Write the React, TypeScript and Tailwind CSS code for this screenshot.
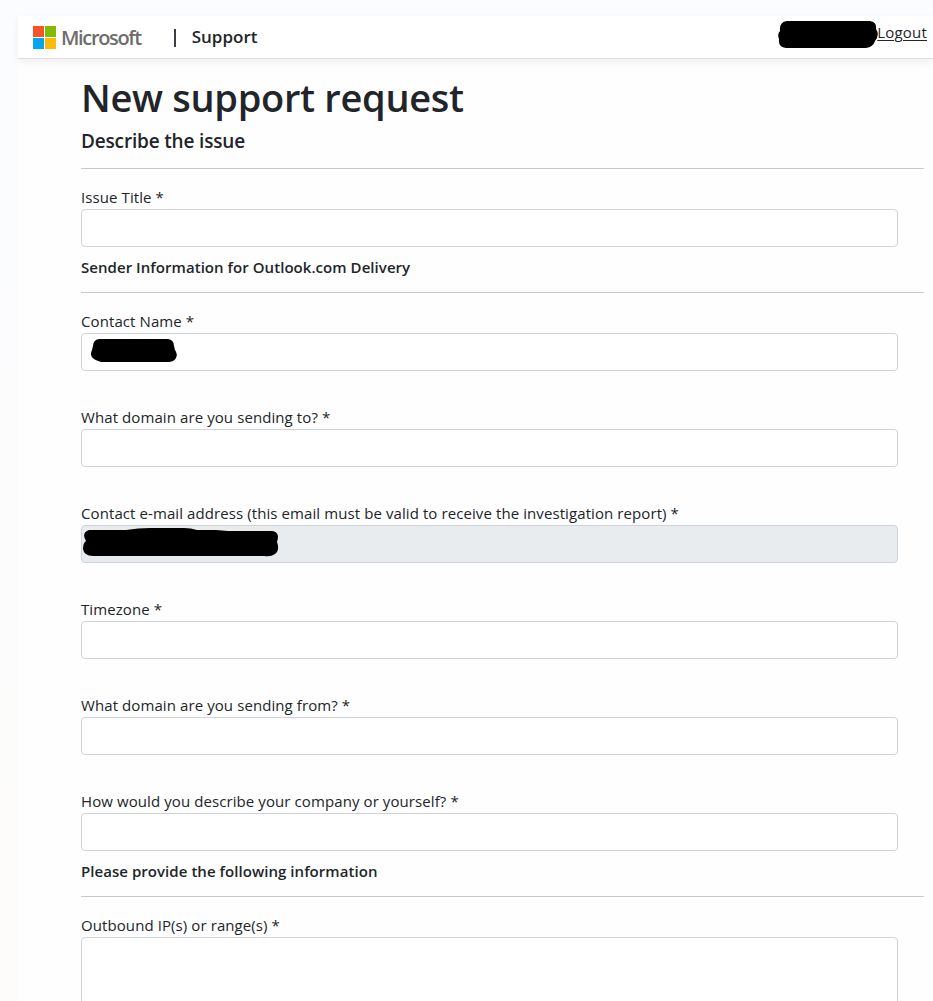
import type { ReactNode } from 'react'

function MicrosoftLogo() {
  return (
    <div className="flex items-center">
      <svg width="23" height="23" viewBox="0 0 23 23" aria-hidden="true">
        <rect width="11" height="11" fill="#f65326" />
        <rect x="12" width="11" height="11" fill="#80bb06" />
        <rect y="12" width="11" height="11" fill="#04a5f0" />
        <rect x="12" y="12" width="11" height="11" fill="#feba08" />
      </svg>
      <span className="relative top-px ml-[5px] text-[20px] leading-6 font-semibold tracking-[-1.35px] text-[#6d6d6d]">Microsoft</span>
    </div>
  )
}

function SectionTitle({ children }: { children: ReactNode }) {
  return (
    <div className="mr-[9px] border-b border-[#c8c9ca] pt-[11px] pb-[15px] mb-4">
      <h3 className="text-[15px] leading-[19px] font-semibold tracking-[0.05px]">{children}</h3>
    </div>
  )
}

type FieldProps = {
  label: string
  className?: string
  disabled?: boolean
  children?: ReactNode
}

function Field({ label, className = 'mb-[34px]', disabled, children }: FieldProps) {
  return (
    <div className={className}>
      <label className="block h-6 text-[15px] leading-6 tracking-[0.09px]">{label}</label>
      <div className="relative w-[817px]">
        <input
          type="text"
          disabled={disabled}
          className="block h-[38px] w-full rounded-[4px] border border-[#ced4da] bg-white px-3 disabled:bg-[#e9ecef]"
        />
        {children}
      </div>
    </div>
  )
}

export default function App() {
  return (
    <div className="h-[1001px] overflow-hidden bg-linear-to-b from-[#fbfcff] to-[#fdfcfa] pt-4 pl-[18px] font-['Open_Sans','Noto_Sans',sans-serif] text-[#212529]">
      <div className="h-full bg-[#fefefe]">
        <header className="flex h-[43px] items-start border-b border-[#dedfe0] bg-white pl-[15px] pr-[6px] shadow-[0_3px_8px_rgba(0,0,0,0.06)]">
          <div className="mt-[9px]">
            <MicrosoftLogo />
          </div>
          <div className="mt-[13px] ml-[33px] h-[18px] w-[2px] bg-[#3b3f43]" />
          <span className="mt-[9px] ml-[16px] text-[17px] leading-6 font-semibold">Support</span>
          <div className="ml-auto flex items-start">
            <svg className="relative mt-[4px] -mr-[2px]" width="101" height="30" viewBox="0 0 101 30">
              <path d="M9 1H92Q99 2 98 9Q102 15 97 21Q95 27 88 28H8Q0 27 1 19Q-1 14 2 11Q1 2 9 1Z" />
            </svg>
            <a href="#" className="mt-1 text-[15px] leading-6 tracking-[0.2px] underline underline-offset-2">Logout</a>
          </div>
        </header>

        <main className="pt-[14px] pl-[63px]">
          <h1 className="mb-2 text-[38px] leading-[48px] font-semibold tracking-[-0.3px]">New support request</h1>
          <div className="mr-[9px] mb-4 border-b border-[#c8c9ca] pb-[15px]">
            <h2 className="text-[19px] leading-6 font-semibold tracking-[-0.17px]">Describe the issue</h2>
          </div>
          <Field label="Issue Title *" className="mb-0" />

          <SectionTitle>Sender Information for Outlook.com Delivery</SectionTitle>
          <Field label="Contact Name *">
            <svg className="absolute top-[5px] left-[9px]" width="88" height="26" viewBox="0 0 88 26">
              <path d="M9 1H78Q84 2 84 8L85 12Q88 16 86 20Q84 24 78 24H11Q5 22 4 21Q-1 18 2 12L3 8Q3 2 9 1Z" />
            </svg>
          </Field>
          <Field label="What domain are you sending to? *" />
          <Field label="Contact e-mail address (this email must be valid to receive the investigation report) *" disabled>
            <svg className="absolute top-[2px] left-[1px]" width="198" height="31" viewBox="0 0 198 31">
              <path d="M7 3H44Q56 1 68 1H102Q109 1 115 3H134L146 4H189Q195 4 196 9Q196 12 195 15Q198 23 193 27Q189 30 182 29H11Q2 29 1 22Q1 16 4 14Q-1 6 7 3Z" />
            </svg>
          </Field>
          <Field label="Timezone *" />
          <Field label="What domain are you sending from? *" />
          <Field label="How would you describe your company or yourself? *" className="mb-0" />

          <SectionTitle>Please provide the following information</SectionTitle>
          <label className="block h-6 text-[15px] leading-6 tracking-[0.09px]">Outbound IP(s) or range(s) *</label>
          <textarea className="block h-[110px] w-[817px] resize-none rounded-[4px] border border-[#ced4da] bg-white px-3" />
        </main>
      </div>
    </div>
  )
}
